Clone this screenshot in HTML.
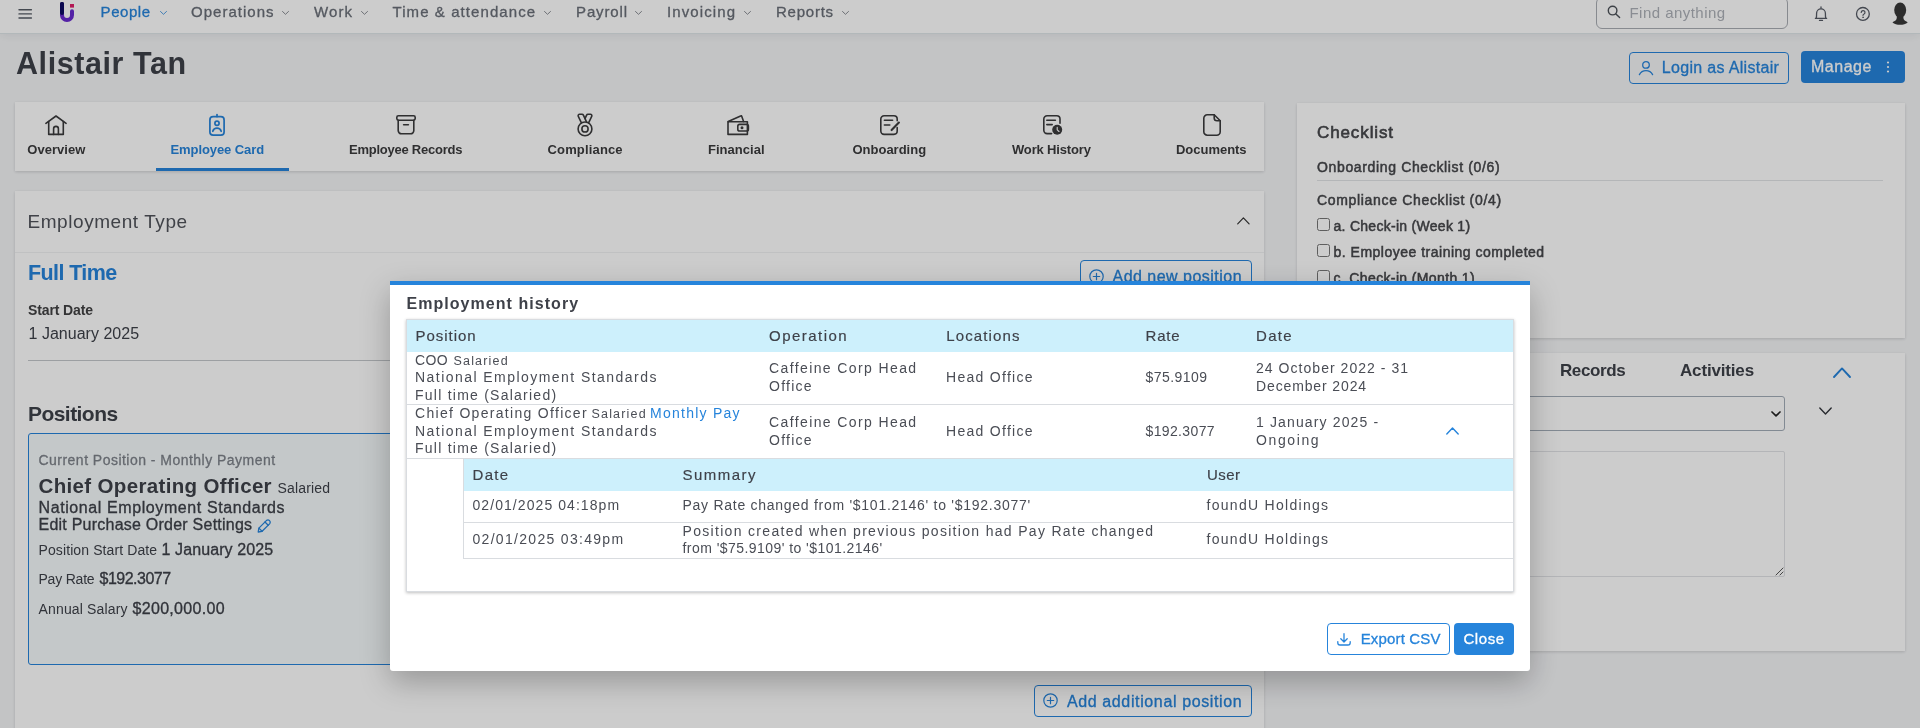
<!DOCTYPE html>
<html lang="en">
<head>
<meta charset="utf-8">
<title>Alistair Tan - Employee Card</title>
<style>
*{box-sizing:border-box;margin:0;padding:0}
html,body{width:1920px;height:728px;overflow:hidden}
body{position:relative;will-change:transform;background:#f4f5f7;font-family:"Liberation Sans",sans-serif;color:#3e4149}
.abs,.t,svg.i{position:absolute}
.t{white-space:nowrap;display:block}
svg.i{overflow:visible;fill:none;stroke-linecap:round;stroke-linejoin:round}
.card{position:absolute;background:#fff;box-shadow:0 1px 3px rgba(0,0,0,.16)}
.btn{position:absolute;border-radius:4px;display:block;text-decoration:none;font-family:inherit;padding:0;margin:0;text-align:left;cursor:pointer}
.btn.o{border:1.5px solid #2684db;background:transparent}
.btn.p{background:#2684db}
table,tr{position:absolute;display:block}
thead,tbody,th,td{display:block;font-weight:400;text-align:left}
.hr{position:absolute;height:1px;background:#c9cdd1}
</style>
</head>
<body>

<header class="abs" style="left:0px;top:0px;width:1920px;height:34px;background:#fff;border-bottom:1px solid #dfe6e9;box-shadow:0 2px 9px rgba(0,0,0,.07)">
<svg class="i" style="left:19px;top:8px" width="13" height="12" viewBox="0 0 13 12" stroke="#565c65" stroke-width="1.4" stroke-linecap="butt"><path d="M0 1.7h12.4M0 5.9h12.4M0 10h12.4"/></svg>
<svg class="i" style="left:59px;top:3px" width="16" height="20" viewBox="0 0 16 20" stroke-linecap="butt"><path d="M3 1v10.8" stroke="#0d0a63" stroke-width="4"/><path d="M3 10.5v1.5a5 5 0 0 0 10 0V8.2" stroke="#6a2bd0" stroke-width="4"/><path d="M3 1v9" stroke="#0d0a63" stroke-width="4"/><rect x="11" y="1" width="4" height="3.6" fill="#e01e68" stroke="none"/></svg>
<nav>
<a class="t" style="left:100.6px;top:4.31px;font-size:15px;line-height:15px;font-weight:400;-webkit-text-stroke:0.3px;color:#2684db;letter-spacing:0.536px;">People</a>
<svg class="i" style="left:160px;top:11px" width="7" height="4" viewBox="0 0 7 4" stroke="#2684db" stroke-width="1" opacity=".8"><path d="M.5.5 3.5 3.3 6.5.5"/></svg>
<a class="t" style="left:191px;top:4.31px;font-size:15px;line-height:15px;font-weight:400;-webkit-text-stroke:0.3px;color:#6a6f78;letter-spacing:1.025px;">Operations</a>
<svg class="i" style="left:282px;top:11px" width="7" height="4" viewBox="0 0 7 4" stroke="#6a6f78" stroke-width="1" opacity=".8"><path d="M.5.5 3.5 3.3 6.5.5"/></svg>
<a class="t" style="left:314px;top:4.31px;font-size:15px;line-height:15px;font-weight:400;-webkit-text-stroke:0.3px;color:#6a6f78;letter-spacing:1.122px;">Work</a>
<svg class="i" style="left:360.5px;top:11px" width="7" height="4" viewBox="0 0 7 4" stroke="#6a6f78" stroke-width="1" opacity=".8"><path d="M.5.5 3.5 3.3 6.5.5"/></svg>
<a class="t" style="left:392.5px;top:4.31px;font-size:15px;line-height:15px;font-weight:400;-webkit-text-stroke:0.3px;color:#6a6f78;letter-spacing:1.078px;">Time &amp; attendance</a>
<svg class="i" style="left:543.5px;top:11px" width="7" height="4" viewBox="0 0 7 4" stroke="#6a6f78" stroke-width="1" opacity=".8"><path d="M.5.5 3.5 3.3 6.5.5"/></svg>
<a class="t" style="left:576px;top:4.31px;font-size:15px;line-height:15px;font-weight:400;-webkit-text-stroke:0.3px;color:#6a6f78;letter-spacing:0.873px;">Payroll</a>
<svg class="i" style="left:635px;top:11px" width="7" height="4" viewBox="0 0 7 4" stroke="#6a6f78" stroke-width="1" opacity=".8"><path d="M.5.5 3.5 3.3 6.5.5"/></svg>
<a class="t" style="left:667px;top:4.31px;font-size:15px;line-height:15px;font-weight:400;-webkit-text-stroke:0.3px;color:#6a6f78;letter-spacing:1.112px;">Invoicing</a>
<svg class="i" style="left:744px;top:11px" width="7" height="4" viewBox="0 0 7 4" stroke="#6a6f78" stroke-width="1" opacity=".8"><path d="M.5.5 3.5 3.3 6.5.5"/></svg>
<a class="t" style="left:776px;top:4.31px;font-size:15px;line-height:15px;font-weight:400;-webkit-text-stroke:0.3px;color:#6a6f78;letter-spacing:0.761px;">Reports</a>
<svg class="i" style="left:841.5px;top:11px" width="7" height="4" viewBox="0 0 7 4" stroke="#6a6f78" stroke-width="1" opacity=".8"><path d="M.5.5 3.5 3.3 6.5.5"/></svg>
</nav>
<div class="abs" style="left:1596px;top:-3px;width:192px;height:32px;border:1px solid #a9adb3;border-radius:6px"></div>
<svg class="i" style="left:1607px;top:5px" width="14" height="14" viewBox="0 0 14 14" stroke="#4d5259" stroke-width="1.4"><circle cx="5.6" cy="5.6" r="4.3"/><path d="M8.9 8.9 12.6 12.6"/></svg>
<span class="t" style="left:1629.5px;top:5.2px;font-size:15px;line-height:15px;font-weight:400;color:#adb1b8;letter-spacing:0.461px;">Find anything</span>
<svg class="i" style="left:1813px;top:5px" width="16" height="17" viewBox="0 0 16 17" stroke="#555a64" stroke-width="1.3"><path d="M8 1.9v1.3"/><path d="M2.4 13.4h11.2"/><path d="M3.2 13.4c.4-1.3.4-2.6.4-5.2a4.4 4.4 0 0 1 8.8 0c0 2.6 0 3.9.4 5.2"/><path d="M6.5 15.4h3"/></svg>
<svg class="i" style="left:1855px;top:6px" width="16" height="16" viewBox="0 0 16 16" stroke="#555a64" stroke-width="1.3"><circle cx="7.9" cy="7.9" r="6.4"/><path d="M6.2 6.4a1.9 1.9 0 1 1 2.6 1.8c-.5.2-.8.5-.8 1.1" stroke-width="1.2"/><circle cx="8" cy="11.3" r=".5" fill="#555a64" stroke-width=".6"/></svg>
<svg class="i" style="left:1891px;top:2px" width="18" height="24" viewBox="0 0 18 24"><ellipse cx="9.2" cy="8.1" rx="6" ry="7.6" fill="#383838" stroke="none"/><path d="M5.6 12.5c.3 2.5.4 4.5-.6 5.6-1 1.1-2.6 1.5-3.5 2.4 1.8 1.5 4.6 2.3 7.6 2.3s5.8-.8 7.6-2.3c-.9-.9-2.5-1.3-3.5-2.4-1-1.1-.9-3.1-.6-5.6z" fill="#383838" stroke="none"/></svg>
</header>
<main>
<h1 class="t" style="left:16px;top:48.01px;font-size:30.5px;line-height:30.5px;font-weight:700;color:#3e4149;letter-spacing:0.569px;">Alistair Tan</h1>
<a class="btn o" style="left:1629px;top:52px;width:160px;height:32px;">
<svg class="i" style="left:7.5px;top:6.5px" width="16" height="16" viewBox="0 0 16 16" stroke="#2684db" stroke-width="1.3"><circle cx="8" cy="4.9" r="3.3"/><path d="M1.4 14.6c1.3-2.6 3.6-4 6.6-4s5.3 1.4 6.6 4"/></svg>
<span class="t" style="left:31.8px;top:7.11px;font-size:16px;line-height:16px;font-weight:400;-webkit-text-stroke:0.32px;color:#2684db;letter-spacing:0.315px;">Login as Alistair</span>
</a>
<button class="btn p" style="left:1801px;top:51px;width:104px;height:32px;border:0">
<span class="t" style="left:10px;top:7.81px;font-size:16px;line-height:16px;font-weight:400;-webkit-text-stroke:0.32px;color:#fff;letter-spacing:0.514px;">Manage</span>
<svg class="i" style="left:85px;top:10px" width="4" height="12" viewBox="0 0 4 12" fill="#fff"><circle cx="2" cy="1.5" r="1.1" fill="#fff"/><circle cx="2" cy="6" r="1.1" fill="#fff"/><circle cx="2" cy="10.5" r="1.1" fill="#fff"/></svg>
</button>
<section class="card" style="left:15px;top:102px;width:1249px;height:69px;">
<svg class="i" style="left:30px;top:12.5px" width="22" height="21" viewBox="0 0 22 21" stroke="#3b3b3d" stroke-width="1.6"><path d="M.900 8.3 11 1l10.1 7.3"/><path d="M3.7 6.6V19.4h14.6V6.6"/><path d="M8.6 19.4v-5.6a2.4 2.4 0 0 1 4.8 0v5.6"/></svg>
<svg class="i" style="left:194px;top:12px" width="16" height="22" viewBox="0 0 16 22" stroke="#2684db" stroke-width="1.7"><rect x=".900" y="2.7" width="14.2" height="18.4" rx="3.2"/><path d="M8 .600v2"/><circle cx="8" cy="9.3" r="2.1"/><path d="M3.8 17.3a4.4 4.4 0 0 1 8.4 0"/></svg>
<svg class="i" style="left:381px;top:13px" width="20" height="20" viewBox="0 0 20 20" stroke="#3b3b3d" stroke-width="1.6"><rect x=".800" y=".800" width="18.4" height="4.4" rx="1.6"/><path d="M2.2 5.2v10.4a3.2 3.2 0 0 0 3.2 3.2h9.2a3.2 3.2 0 0 0 3.2-3.2V5.2"/><path d="M7.6 9.8h4.8"/></svg>
<svg class="i" style="left:562px;top:11px" width="16" height="24" viewBox="0 0 16 24" stroke="#3b3b3d" stroke-width="1.6"><circle cx="8" cy="15.9" r="6.9"/><circle cx="8" cy="15.9" r="3.1"/><path d="M4.3 9.7 1.3 3.4A1.5 1.5 0 0 1 2.7 1.2H5A1.5 1.5 0 0 1 6.4 2.1L9.5 8.8"/><path d="M11.7 9.7l3-6.3A1.5 1.5 0 0 0 13.3 1.2H11A1.5 1.5 0 0 0 9.6 2.1L8 5.6"/></svg>
<svg class="i" style="left:712px;top:12.5px" width="22" height="21" viewBox="0 0 22 21" stroke="#3b3b3d" stroke-width="1.6"><path d="M1 6.8v12.6h19.4V6.8z"/><path d="M1.2 6.6 13.6.900a.800.8 0 0 1 1.1.400l1.9 5.2"/><rect x="10.8" y="9.4" width="10.6" height="6.6" rx="1.8"/><circle cx="15" cy="12.7" r=".700" fill="#3b3b3d"/></svg>
<svg class="i" style="left:865px;top:13px" width="20" height="20" viewBox="0 0 20 20" stroke="#3b3b3d" stroke-width="1.6"><path d="M17.2 12.5v3.6a3.3 3.3 0 0 1-3.3 3.3H4.1A3.3 3.3 0 0 1 .800 16.1V4.1A3.3 3.3 0 0 1 4.1.800h9.8a3.3 3.3 0 0 1 3.3 3.3v1.7"/><path d="M4.4 5.3h8.2M4.4 10h5.4"/><path d="M11.6 15.1 18.9 7.6" stroke-width="2.1"/></svg>
<svg class="i" style="left:1027.5px;top:13px" width="20" height="20" viewBox="0 0 20 20" stroke="#3b3b3d" stroke-width="1.6"><path d="M8.6 18.6H4.1A3.3 3.3 0 0 1 .800 15.3V4.1A3.3 3.3 0 0 1 4.1.800h9.6A3.3 3.3 0 0 1 17 4.1v4.2"/><path d="M3.8 5.2h8.6M3.8 9.6h5.4"/><circle cx="14.2" cy="14.8" r="5" fill="#3b3b3d" stroke="none"/><path d="M14.2 12.4v2.4l1.8 1.7" stroke="#fff" stroke-width="1.1"/></svg>
<svg class="i" style="left:1188px;top:12px" width="18" height="22" viewBox="0 0 18 22" stroke="#3b3b3d" stroke-width="1.6"><path d="M11.2.800H4.3A3.5 3.5 0 0 0 .800 4.3v13.4a3.5 3.5 0 0 0 3.5 3.5h9.4a3.5 3.5 0 0 0 3.5-3.5V6.8z"/><path d="M11.2.800v3.2a2.8 2.8 0 0 0 2.8 2.8h3.2"/></svg>
<a class="t" style="left:12.3px;top:41.3px;font-size:13px;line-height:13px;font-weight:700;color:#3b3b3d;letter-spacing:0.039px;">Overview</a>
<a class="t" style="left:155.5px;top:41.3px;font-size:13px;line-height:13px;font-weight:700;color:#2684db;letter-spacing:-0.088px;">Employee Card</a>
<a class="t" style="left:334px;top:41.3px;font-size:13px;line-height:13px;font-weight:700;color:#3b3b3d;letter-spacing:-0.243px;">Employee Records</a>
<a class="t" style="left:532.5px;top:41.3px;font-size:13px;line-height:13px;font-weight:700;color:#3b3b3d;letter-spacing:0.157px;">Compliance</a>
<a class="t" style="left:693px;top:41.3px;font-size:13px;line-height:13px;font-weight:700;color:#3b3b3d;letter-spacing:0.03px;">Financial</a>
<a class="t" style="left:837.5px;top:41.3px;font-size:13px;line-height:13px;font-weight:700;color:#3b3b3d;letter-spacing:-0.008px;">Onboarding</a>
<a class="t" style="left:997px;top:41.3px;font-size:13px;line-height:13px;font-weight:700;color:#3b3b3d;letter-spacing:-0.161px;">Work History</a>
<a class="t" style="left:1161px;top:41.3px;font-size:13px;line-height:13px;font-weight:700;color:#3b3b3d;letter-spacing:-0.025px;">Documents</a>
<div class="abs" style="left:141px;top:66px;width:133px;height:3px;background:#2684db"></div>
</section>
<section class="card" style="left:15px;top:191px;width:1249px;height:560px;">
<h2 class="t" style="left:12.5px;top:21.3px;font-size:19px;line-height:19px;font-weight:400;color:#50535a;letter-spacing:0.562px;">Employment Type</h2>
<svg class="i" style="left:1221.5px;top:25.5px" width="13" height="8" viewBox="0 0 13 8" stroke="#333" stroke-width="1.2"><path d="M.700 6.9 6.4.900l5.7 6"/></svg>
<div class="hr" style="left:0;top:61px;width:1249px;background:#f1f2f3"></div>
<h3 class="t" style="left:13px;top:71.5px;font-size:21.5px;line-height:21.5px;font-weight:700;color:#2684db;letter-spacing:-0.611px;">Full Time</h3>
<span class="t" style="left:13px;top:111.51px;font-size:14px;line-height:14px;font-weight:700;color:#414143;letter-spacing:-0.116px;">Start Date</span>
<span class="t" style="left:13.5px;top:134.7px;font-size:16px;line-height:16px;font-weight:400;color:#3e4149;letter-spacing:0.022px;">1 January 2025</span>
<div class="hr" style="left:13px;top:169px;width:1223px;background:#c3c7cb"></div>
<a class="btn o" style="left:1065px;top:69px;width:172px;height:32px;">
<svg class="i" style="left:8px;top:7.5px" width="15" height="15" viewBox="0 0 15 15" stroke="#2684db" stroke-width="1.2"><circle cx="7.5" cy="7.5" r="6.7"/><path d="M7.5 4.3v6.4M4.3 7.5h6.4"/></svg>
<span class="t" style="left:31.5px;top:7.5px;font-size:16px;line-height:16px;font-weight:400;-webkit-text-stroke:0.32px;color:#2684db;letter-spacing:0.483px;">Add new position</span>
</a>
<h3 class="t" style="left:13px;top:211.72px;font-size:21px;line-height:21px;font-weight:700;color:#3e4149;letter-spacing:-0.552px;">Positions</h3>
<article class="abs" style="left:13px;top:242px;width:1223px;height:232px;border:1px solid #2684db;border-radius:3px;background:#f6fbfc"></article>
<span class="t" style="left:23.5px;top:261.51px;font-size:14px;line-height:14px;font-weight:400;-webkit-text-stroke:0.28px;color:#7d828a;letter-spacing:0.473px;">Current Position - Monthly Payment</span>
<span class="t" style="left:23.5px;top:285.01px;font-size:20.5px;line-height:20.5px;font-weight:700;color:#3e4149;letter-spacing:0.344px;">Chief Operating Officer</span>
<span class="t" style="left:262.5px;top:290.01px;font-size:14px;line-height:14px;font-weight:400;color:#3e4149;letter-spacing:0.175px;">Salaried</span>
<span class="t" style="left:23.5px;top:308.5px;font-size:16px;line-height:16px;font-weight:400;-webkit-text-stroke:0.32px;color:#3e4149;letter-spacing:0.595px;">National Employment Standards</span>
<span class="t" style="left:23.5px;top:326px;font-size:16px;line-height:16px;font-weight:400;-webkit-text-stroke:0.32px;color:#3e4149;letter-spacing:0.236px;">Edit Purchase Order Settings</span>
<svg class="i" style="left:242px;top:328px" width="14" height="14" viewBox="0 0 14 14" stroke="#2684db" stroke-width="1.3"><path d="M1.2 13 1.9 9.1 9.6 1.4A2.3 2.3 0 0 1 12.8 4.6L5.1 12.3Z"/><path d="M1.9 9.1l3.2 3.2M8 3l3.2 3.2"/></svg>
<span class="t" style="left:23.5px;top:351.51px;font-size:14px;line-height:14px;font-weight:400;color:#3e4149;letter-spacing:0.104px;">Position Start Date</span>
<span class="t" style="left:146.5px;top:350.5px;font-size:16px;line-height:16px;font-weight:400;-webkit-text-stroke:0.32px;color:#3e4149;letter-spacing:0.099px;">1 January 2025</span>
<span class="t" style="left:23.5px;top:381.01px;font-size:14px;line-height:14px;font-weight:400;color:#3e4149;letter-spacing:-0.213px;">Pay Rate</span>
<span class="t" style="left:84.5px;top:380px;font-size:16px;line-height:16px;font-weight:400;-webkit-text-stroke:0.32px;color:#3e4149;letter-spacing:-0.505px;">$192.3077</span>
<span class="t" style="left:23.5px;top:411.01px;font-size:14px;line-height:14px;font-weight:400;color:#3e4149;letter-spacing:0.161px;">Annual Salary</span>
<span class="t" style="left:117.5px;top:410px;font-size:16px;line-height:16px;font-weight:400;-webkit-text-stroke:0.32px;color:#3e4149;letter-spacing:0.312px;">$200,000.00</span>
<a class="btn o" style="left:1019px;top:494px;width:218px;height:32px;">
<svg class="i" style="left:8px;top:7px" width="15" height="15" viewBox="0 0 15 15" stroke="#2684db" stroke-width="1.2"><circle cx="7.5" cy="7.5" r="6.7"/><path d="M7.5 4.3v6.4M4.3 7.5h6.4"/></svg>
<span class="t" style="left:31.9px;top:7.7px;font-size:16px;line-height:16px;font-weight:400;-webkit-text-stroke:0.32px;color:#2684db;letter-spacing:0.627px;">Add additional position</span>
</a>
</section>
<aside class="card" style="left:1297px;top:103px;width:608px;height:235px;">
<h4 class="t" style="left:20px;top:21.3px;font-size:17px;line-height:17px;font-weight:400;-webkit-text-stroke:0.61px;color:#46474b;letter-spacing:0.891px;">Checklist</h4>
<span class="t" style="left:20px;top:57.01px;font-size:14px;line-height:14px;font-weight:400;-webkit-text-stroke:0.5px;color:#46474b;letter-spacing:0.643px;">Onboarding Checklist (0/6)</span>
<div class="hr" style="left:20px;top:77px;width:566px;background:#e2e4e6"></div>
<span class="t" style="left:20px;top:90.01px;font-size:14px;line-height:14px;font-weight:400;-webkit-text-stroke:0.5px;color:#46474b;letter-spacing:0.672px;">Compliance Checklist (0/4)</span>
<span class="abs" style="left:20px;top:115px;width:13px;height:13px;border:1px solid #767676;border-radius:2.5px;background:#fff"></span>
<label class="t" style="left:36.5px;top:116.31px;font-size:14px;line-height:14px;font-weight:400;-webkit-text-stroke:0.5px;color:#46474b;letter-spacing:0.282px;">a. Check-in (Week 1)</label>
<span class="abs" style="left:20px;top:141px;width:13px;height:13px;border:1px solid #767676;border-radius:2.5px;background:#fff"></span>
<label class="t" style="left:36.5px;top:142.31px;font-size:14px;line-height:14px;font-weight:400;-webkit-text-stroke:0.5px;color:#46474b;letter-spacing:0.5px;">b. Employee training completed</label>
<span class="abs" style="left:20px;top:167px;width:13px;height:13px;border:1px solid #767676;border-radius:2.5px;background:#fff"></span>
<label class="t" style="left:36.5px;top:168.31px;font-size:14px;line-height:14px;font-weight:400;-webkit-text-stroke:0.5px;color:#46474b;letter-spacing:0.364px;">c. Check-in (Month 1)</label>
</aside>
<aside class="card" style="left:1297px;top:353px;width:608px;height:298px;">
<span class="t" style="left:263px;top:9.41px;font-size:17px;line-height:17px;font-weight:700;color:#3e4149;letter-spacing:-0.405px;">Records</span>
<span class="t" style="left:383px;top:9.41px;font-size:17px;line-height:17px;font-weight:700;color:#3e4149;letter-spacing:-0.166px;">Activities</span>
<svg class="i" style="left:536px;top:14px" width="18" height="11" viewBox="0 0 18 11" stroke="#2684db" stroke-width="1.9"><path d="M1 10 9 1.4 17 10"/></svg>
<div class="abs" style="left:20px;top:43px;width:468px;height:35px;border:1px solid #a3adb8;border-radius:3px"></div>
<svg class="i" style="left:473.5px;top:57.5px" width="10" height="6" viewBox="0 0 10 6" stroke="#222" stroke-width="1.7"><path d="M1 1 5 4.8 9 1"/></svg>
<svg class="i" style="left:521.5px;top:54px" width="13" height="8" viewBox="0 0 13 8" stroke="#33363c" stroke-width="1.4"><path d="M.800.9 6.5 6.9 12.2.900"/></svg>
<div class="abs" style="left:20px;top:98px;width:468px;height:126px;border:1px solid #e1e3e6;border-radius:2px"></div>
<svg class="i" style="left:478px;top:214px" width="9" height="9" viewBox="0 0 9 9" stroke="#444" stroke-width=".9"><path d="M8 1 1 8M8 5 5 8"/></svg>
</aside>
</main>
<div class="abs" style="left:0;top:0;width:1920px;height:728px;background:rgba(0,0,0,.2)"></div>
<div role="dialog" class="abs" style="left:390px;top:281px;width:1140px;height:390px;background:#fff;border-top:4px solid #2684db;border-radius:0 0 3px 3px;box-shadow:0 11px 30px rgba(0,0,0,.26)">
<h5 class="t" style="left:16.5px;top:10.7px;font-size:16px;line-height:16px;font-weight:700;color:#3e4149;letter-spacing:1.046px;">Employment history</h5>
<div class="abs" style="left:16px;top:34px;width:1108px;height:273px;border:1px solid #d9dce0;box-shadow:0 1px 3px rgba(0,0,0,.25)">
<table style="left:0px;top:0px;width:1106px;height:271px;">
<thead>
<tr style="left:0px;top:0px;width:1106px;height:32px;background:#cdf0fc;"><th><span class="t th" style="left:8.5px;top:8.31px;font-size:15px;line-height:15px;font-weight:400;-webkit-text-stroke:0.16px;color:#3e4149;letter-spacing:0.961px;">Position</span></th><th><span class="t th" style="left:362px;top:8.31px;font-size:15px;line-height:15px;font-weight:400;-webkit-text-stroke:0.16px;color:#3e4149;letter-spacing:1.466px;">Operation</span></th><th><span class="t th" style="left:539.3px;top:8.31px;font-size:15px;line-height:15px;font-weight:400;-webkit-text-stroke:0.16px;color:#3e4149;letter-spacing:1.11px;">Locations</span></th><th><span class="t th" style="left:738.5px;top:8.31px;font-size:15px;line-height:15px;font-weight:400;-webkit-text-stroke:0.16px;color:#3e4149;letter-spacing:0.804px;">Rate</span></th><th><span class="t th" style="left:849px;top:8.31px;font-size:15px;line-height:15px;font-weight:400;-webkit-text-stroke:0.16px;color:#3e4149;letter-spacing:1.304px;">Date</span></th><th></th></tr>
</thead>
<tbody>
<tr style="left:0px;top:32px;width:1106px;height:53px;border-bottom:1px solid #d9dce0;"><td><span class="t" style="left:8px;top:1.01px;font-size:14px;line-height:14px;font-weight:400;color:#4a4d55;letter-spacing:0.355px;">COO</span><span class="t" style="left:46.5px;top:3.01px;font-size:12.5px;line-height:12.5px;font-weight:400;color:#4a4d55;letter-spacing:1.175px;">Salaried</span><span class="t" style="left:8px;top:18.31px;font-size:14px;line-height:14px;font-weight:400;color:#4a4d55;letter-spacing:1.451px;">National Employment Standards</span><span class="t" style="left:8px;top:36.01px;font-size:14px;line-height:14px;font-weight:400;color:#4a4d55;letter-spacing:1.243px;">Full time (Salaried)</span></td><td><span class="t" style="left:362px;top:9.31px;font-size:14px;line-height:14px;font-weight:400;color:#4a4d55;letter-spacing:1.389px;">Caffeine Corp Head</span><span class="t" style="left:362px;top:27.31px;font-size:14px;line-height:14px;font-weight:400;color:#4a4d55;letter-spacing:1.257px;">Office</span></td><td><span class="t" style="left:539px;top:18.31px;font-size:14px;line-height:14px;font-weight:400;color:#4a4d55;letter-spacing:1.293px;">Head Office</span></td><td><span class="t" style="left:738.5px;top:18.31px;font-size:14px;line-height:14px;font-weight:400;color:#4a4d55;letter-spacing:0.456px;">$75.9109</span></td><td><span class="t" style="left:849px;top:9.01px;font-size:14px;line-height:14px;font-weight:400;color:#4a4d55;letter-spacing:1.041px;">24 October 2022 - 31</span><span class="t" style="left:849px;top:27.31px;font-size:14px;line-height:14px;font-weight:400;color:#4a4d55;letter-spacing:0.873px;">December 2024</span></td><td></td></tr>
<tr style="left:0px;top:85px;width:1106px;height:54px;border-bottom:1px solid #d9dce0;"><td><span class="t" style="left:8px;top:1.31px;font-size:14px;line-height:14px;font-weight:400;color:#4a4d55;letter-spacing:1.304px;">Chief Operating Officer</span><span class="t" style="left:184.5px;top:3.3px;font-size:12.5px;line-height:12.5px;font-weight:400;color:#4a4d55;letter-spacing:1.175px;">Salaried</span><span class="t" style="left:243px;top:1.31px;font-size:14px;line-height:14px;font-weight:400;color:#2684db;letter-spacing:1.255px;">Monthly Pay</span><span class="t" style="left:8px;top:19.01px;font-size:14px;line-height:14px;font-weight:400;color:#4a4d55;letter-spacing:1.451px;">National Employment Standards</span><span class="t" style="left:8px;top:36.01px;font-size:14px;line-height:14px;font-weight:400;color:#4a4d55;letter-spacing:1.243px;">Full time (Salaried)</span></td><td><span class="t" style="left:362px;top:10.01px;font-size:14px;line-height:14px;font-weight:400;color:#4a4d55;letter-spacing:1.389px;">Caffeine Corp Head</span><span class="t" style="left:362px;top:27.51px;font-size:14px;line-height:14px;font-weight:400;color:#4a4d55;letter-spacing:1.257px;">Office</span></td><td><span class="t" style="left:539px;top:19.31px;font-size:14px;line-height:14px;font-weight:400;color:#4a4d55;letter-spacing:1.293px;">Head Office</span></td><td><span class="t" style="left:738.5px;top:19.31px;font-size:14px;line-height:14px;font-weight:400;color:#4a4d55;letter-spacing:0.364px;">$192.3077</span></td><td><span class="t" style="left:849px;top:10.01px;font-size:14px;line-height:14px;font-weight:400;color:#4a4d55;letter-spacing:1.135px;">1 January 2025 -</span><span class="t" style="left:849px;top:27.51px;font-size:14px;line-height:14px;font-weight:400;color:#4a4d55;letter-spacing:1.61px;">Ongoing</span></td><td><svg class="i" style="left:1038.5px;top:22px" width="13" height="8" viewBox="0 0 13 8" stroke="#2684db" stroke-width="1.4"><path d="M.800 7.1 6.5 1.1l5.7 6"/></svg></td></tr>
<tr style="left:0px;top:139px;width:1106px;height:132px;"><td colspan="6">
<table style="left:56px;top:-1px;width:1050px;height:101px;border:1px solid #d9dce0;border-right:none">
<thead>
<tr style="left:0px;top:0px;width:1049px;height:32px;background:#cdf0fc;"><th><span class="t th" style="left:8.5px;top:8.01px;font-size:15px;line-height:15px;font-weight:400;-webkit-text-stroke:0.16px;color:#3e4149;letter-spacing:1.304px;">Date</span></th><th><span class="t th" style="left:218.5px;top:8.01px;font-size:15px;line-height:15px;font-weight:400;-webkit-text-stroke:0.16px;color:#3e4149;letter-spacing:1.485px;">Summary</span></th><th><span class="t th" style="left:743px;top:8.01px;font-size:15px;line-height:15px;font-weight:400;-webkit-text-stroke:0.16px;color:#3e4149;letter-spacing:0.476px;">User</span></th></tr>
</thead><tbody>
<tr style="left:0px;top:32px;width:1049px;height:32px;border-bottom:1px solid #d9dce0;"><td><span class="t" style="left:8.5px;top:7.01px;font-size:14px;line-height:14px;font-weight:400;color:#4a4d55;letter-spacing:1.067px;">02/01/2025 04:18pm</span></td><td><span class="t" style="left:218.5px;top:7.01px;font-size:14px;line-height:14px;font-weight:400;color:#4a4d55;letter-spacing:0.726px;">Pay Rate changed from '$101.2146' to '$192.3077'</span></td><td><span class="t" style="left:742.5px;top:7.01px;font-size:14px;line-height:14px;font-weight:400;color:#4a4d55;letter-spacing:1.292px;">foundU Holdings</span></td></tr>
<tr style="left:0px;top:64px;width:1049px;height:35px;"><td><span class="t" style="left:8.5px;top:8.71px;font-size:14px;line-height:14px;font-weight:400;color:#4a4d55;letter-spacing:1.303px;">02/01/2025 03:49pm</span></td><td><span class="t" style="left:218.5px;top:0.51px;font-size:14px;line-height:14px;font-weight:400;color:#4a4d55;letter-spacing:1.314px;">Position created when previous position had Pay Rate changed</span><span class="t" style="left:218.5px;top:17.51px;font-size:14px;line-height:14px;font-weight:400;color:#4a4d55;letter-spacing:0.448px;">from '$75.9109' to '$101.2146'</span></td><td><span class="t" style="left:742.5px;top:8.71px;font-size:14px;line-height:14px;font-weight:400;color:#4a4d55;letter-spacing:1.292px;">foundU Holdings</span></td></tr>
</tbody></table>
</td></tr>
</tbody></table>
</div>
<button class="btn o" style="left:937px;top:338px;width:123px;height:32px;border-width:1px">
<svg class="i" style="left:9px;top:9px" width="14" height="13" viewBox="0 0 14 13" stroke="#2684db" stroke-width="1.3"><path d="M7 .700v8M3.8 5.8 7 9l3.2-3.2"/><path d="M.800 8.6v1.2a2.2 2.2 0 0 0 2.2 2.2h8a2.2 2.2 0 0 0 2.2-2.2V8.6"/></svg>
<span class="t" style="left:32.7px;top:7.41px;font-size:15px;line-height:15px;font-weight:400;-webkit-text-stroke:0.3px;color:#2684db;letter-spacing:0.158px;">Export CSV</span>
</button>
<button class="btn p" style="left:1064px;top:338px;width:60px;height:32px;border:0">
<span class="t" style="left:9.4px;top:8.41px;font-size:15px;line-height:15px;font-weight:400;-webkit-text-stroke:0.3px;color:#fff;letter-spacing:0.585px;">Close</span>
</button>
</div>
</body>
</html>
